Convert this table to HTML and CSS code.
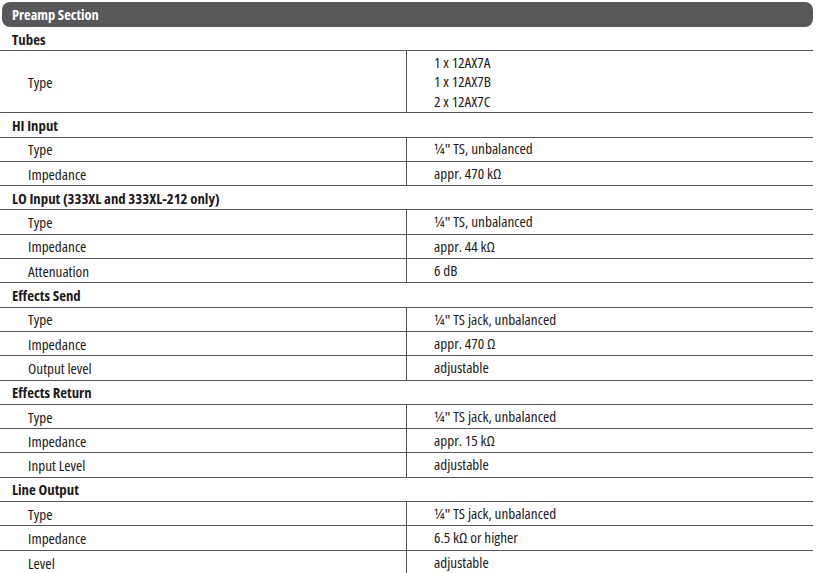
FILE: index.html
```html
<!DOCTYPE html>
<html>
<head>
<meta charset="utf-8">
<link rel="stylesheet" href="styles.css">
</head>
<body>
<div class="spec">
  <div class="title">Preamp Section</div>
  <div class="section">Tubes</div>
  <div class="row tall"><div class="label">Type</div><div class="value"><div>1 x 12AX7A</div><div>1 x 12AX7B</div><div>2 x 12AX7C</div></div></div>
  <div class="section">HI Input</div>
  <div class="row"><div class="label">Type</div><div class="value">¼" TS, unbalanced</div></div>
  <div class="row"><div class="label">Impedance</div><div class="value">appr. 470 kΩ</div></div>
  <div class="section">LO Input (333XL and 333XL-212 only)</div>
  <div class="row"><div class="label">Type</div><div class="value">¼" TS, unbalanced</div></div>
  <div class="row"><div class="label">Impedance</div><div class="value">appr. 44 kΩ</div></div>
  <div class="row"><div class="label">Attenuation</div><div class="value">6 dB</div></div>
  <div class="section">Effects Send</div>
  <div class="row"><div class="label">Type</div><div class="value">¼" TS jack, unbalanced</div></div>
  <div class="row"><div class="label">Impedance</div><div class="value">appr. 470 Ω</div></div>
  <div class="row"><div class="label">Output level</div><div class="value">adjustable</div></div>
  <div class="section">Effects Return</div>
  <div class="row"><div class="label">Type</div><div class="value">¼" TS jack, unbalanced</div></div>
  <div class="row"><div class="label">Impedance</div><div class="value">appr. 15 kΩ</div></div>
  <div class="row"><div class="label">Input Level</div><div class="value">adjustable</div></div>
  <div class="section">Line Output</div>
  <div class="row"><div class="label">Type</div><div class="value">¼" TS jack, unbalanced</div></div>
  <div class="row"><div class="label">Impedance</div><div class="value">6.5 kΩ or higher</div></div>
  <div class="row last"><div class="label">Level</div><div class="value">adjustable</div></div>
</div>
</body>
</html>
```
FILE: styles.css
```css
html, body {
  margin: 0;
  padding: 0;
  background: #ffffff;
}
.spec {
  width: 813px;
  font-family: "Open Sans", "DejaVu Sans Condensed", sans-serif;
  font-stretch: 75%;
  font-size: 15.2px;
  color: #1e1a1b;
}
.title {
  margin: 2px 0 0 2px;
  height: 25px;
  box-sizing: border-box;
  background: #58585a;
  border-radius: 8px;
  color: #ffffff;
  font-weight: bold;
  font-size: 14.4px;
  padding-left: 10px;
  display: flex;
  align-items: center;
}
.section {
  height: 24.3px;
  box-sizing: border-box;
  border-bottom: 1px solid #555555;
  font-weight: 700;
  font-size: 14.8px;
  padding-left: 12px;
  display: flex;
  align-items: center;
}
.row {
  height: 24.3px;
  box-sizing: border-box;
  border-bottom: 1px solid #555555;
  display: grid;
  grid-template-columns: 407px 1fr;
}
.row.tall {
  height: 62px;
}
.row.last {
  border-bottom: none;
}
.label {
  border-right: 1px solid #555555;
  padding-left: 28px;
  display: flex;
  align-items: center;
}
.value {
  padding-left: 27px;
  display: flex;
  flex-direction: column;
  justify-content: center;
  line-height: 19.5px;
}
```
